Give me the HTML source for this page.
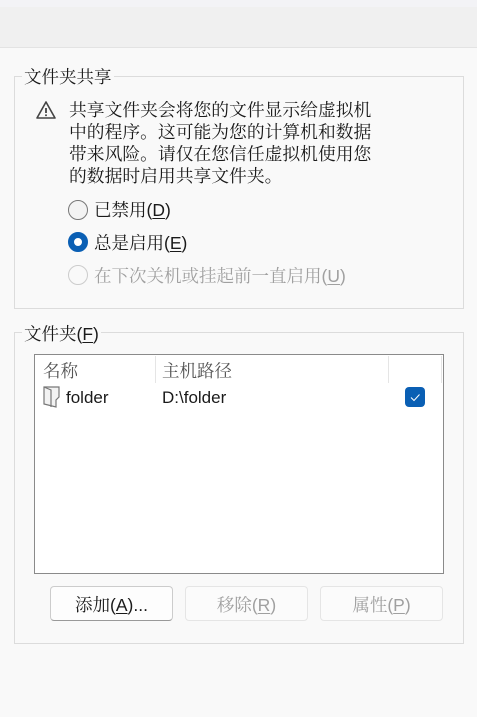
<!DOCTYPE html>
<html><head><meta charset="utf-8"><style>
body{margin:0;width:477px;height:717px;background:#f9f9f9;font-family:"Liberation Sans","Noto Serif CJK SC",serif;font-size:17.5px;color:#1a1a1a;position:relative;overflow:hidden}
.a{position:absolute}
.grp{position:absolute;border:1px solid #dcdcdc}
.leg{position:absolute;background:#f9f9f9;padding:0 2px;line-height:22px;white-space:nowrap}
.rad{position:absolute;width:17px;height:17px;border:1px solid #888;border-radius:50%;background:#f3f3f3;box-sizing:border-box}
.btn{position:absolute;height:35px;box-sizing:border-box;border:1px solid #e5e5e5;border-radius:4px;background:#fbfbfb;text-align:center;line-height:37px;color:#a0a0a0}
u{text-underline-offset:2px}
</style></head><body>
<div class="a" style="left:0;top:0;width:477px;height:7px;background:#f3f3f6"></div>
<div class="a" style="left:0;top:7px;width:477px;height:40px;background:#f0f0f0;border-bottom:1px solid #e3e3e3"></div>

<div class="grp" style="left:14px;top:76px;width:448px;height:231px"></div>
<div class="leg" style="left:22px;top:66px">文件夹共享</div>
<svg class="a" style="left:35px;top:100px" width="22" height="20" viewBox="0 0 22 20"><path d="M11 2 L20 18 L2 18 Z" fill="none" stroke="#444" stroke-width="1.6" stroke-linejoin="round"/><path d="M11 8v5" stroke="#444" stroke-width="1.8"/><circle cx="11" cy="15.3" r="1" fill="#444"/></svg>
<div class="a" style="left:69px;top:99px;width:330px;line-height:22px;font-size:17.8px">共享文件夹会将您的文件显示给虚拟机<br>中的程序。这可能为您的计算机和数据<br>带来风险。请仅在您信任虚拟机使用您<br>的数据时启用共享文件夹。</div>

<div class="rad" style="left:68px;top:200px;width:20px;height:20px;border-color:#777"></div>
<div class="a" style="left:94px;top:199px;line-height:22px">已禁用(<u>D</u>)</div>
<div class="rad" style="left:68px;top:232px;width:20px;height:20px;border:6px solid #0a5fb4;background:#fff"></div>
<div class="a" style="left:94px;top:232px;line-height:22px">总是启用(<u>E</u>)</div>
<div class="rad" style="left:68px;top:265px;width:20px;height:20px;border-color:#ccc;background:#f9f9f9"></div>
<div class="a" style="left:94px;top:265px;line-height:22px;color:#a0a0a0">在下次关机或挂起前一直启用(<u>U</u>)</div>

<div class="grp" style="left:14px;top:332px;width:448px;height:310px"></div>
<div class="leg" style="left:22px;top:323px">文件夹(<u>F</u>)</div>
<div class="a" style="left:34px;top:354px;width:408px;height:218px;border:1px solid #8a8a8a;background:#fff"></div>
<div class="a" style="left:155px;top:356px;width:1px;height:27px;background:#e5e5e5"></div>
<div class="a" style="left:388px;top:356px;width:1px;height:27px;background:#e5e5e5"></div>
<div class="a" style="left:441px;top:356px;width:1px;height:27px;background:#e5e5e5"></div>
<div class="a" style="left:43px;top:360px;line-height:22px;color:#555">名称</div>
<div class="a" style="left:162px;top:360px;line-height:22px;color:#555">主机路径</div>
<svg class="a" style="left:43px;top:386px" width="18" height="22" viewBox="0 0 18 22"><path d="M1 1h15v10l-3 3v7l-12-3z" fill="#f2f2f2" stroke="#777" stroke-width="1.2"/><path d="M1 1l7 3v17" fill="none" stroke="#777" stroke-width="1.2"/></svg>
<div class="a" style="left:66px;top:387px;line-height:22px;font-size:17px">folder</div>
<div class="a" style="left:162px;top:387px;line-height:22px;font-size:17px">D:\folder</div>
<div class="a" style="left:405px;top:387px;width:20px;height:20px;border-radius:4px;background:#0a5fb4"></div>
<svg class="a" style="left:405px;top:387px" width="20" height="20"><path d="M6 10.5l3 3 5.5-6" fill="none" stroke="#fff" stroke-width="1"/></svg>

<div class="btn" style="left:50px;top:586px;width:123px;color:#1a1a1a;border-color:#ccc;border-bottom-color:#999;background:#fdfdfd">添加(<u>A</u>)...</div>
<div class="btn" style="left:185px;top:586px;width:123px">移除(<u>R</u>)</div>
<div class="btn" style="left:320px;top:586px;width:123px">属性(<u>P</u>)</div>
</body></html>
